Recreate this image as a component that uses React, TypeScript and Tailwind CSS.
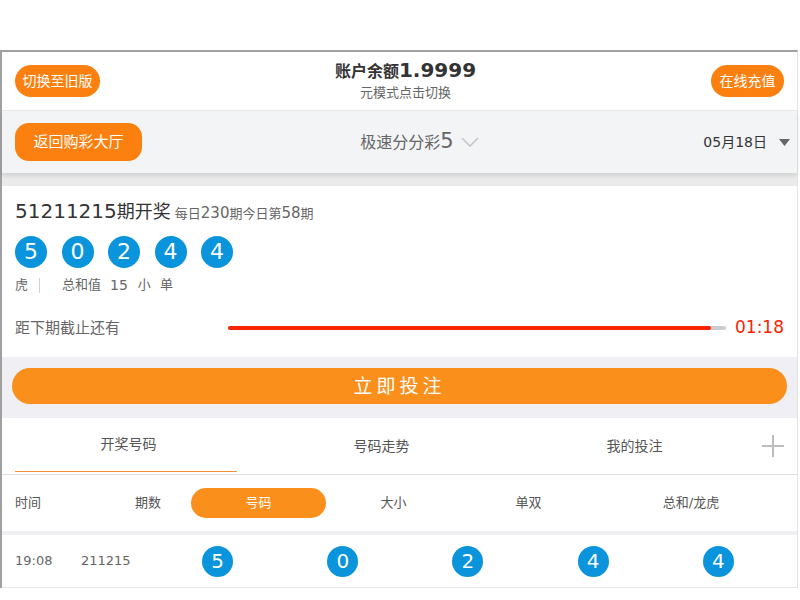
import React from "react";

const balls = [5, 0, 2, 4, 4];

const subTabs = [
  { label: "大小", w: "w-[135px]" },
  { label: "单双", w: "w-[135px]" },
  { label: "总和/龙虎", w: "w-[190px]" },
];

function Ball({ n, big }: { n: number; big?: boolean }) {
  return (
    <span
      className={
        big
          ? "flex h-[32px] w-[32px] items-center justify-center rounded-full bg-[#0a94dc] text-[22px] leading-none text-white"
          : "flex h-[31px] w-[31px] items-center justify-center rounded-full bg-[#0a94dc] text-[20px] leading-none text-white"
      }
    >
      {n}
    </span>
  );
}

export default function App() {
  return (
    <div className="min-h-[600px] bg-white pt-[50px] font-['DejaVu_Sans','Noto_Sans_CJK_SC',sans-serif]">
      <div className="mr-[2px] border-t-2 border-l-2 border-r border-t-[#a0a0a0] border-l-[#a0a0a0] border-r-[#e3e3e3]">
        {/* balance bar ------------------------------------------------ */}
        <div className="grid h-[59px] grid-cols-[1fr_auto_1fr] items-center border-b border-[#e8e8e8] px-[13px]">
          <button className="flex h-[32px] w-[85px] items-center justify-center rounded-full bg-[#fc800f] text-[14px] text-white">
            切换至旧版
          </button>
          <div className="flex flex-col items-center pl-[12px] pb-[2px]">
            <div className="leading-[24px] font-bold text-[#333]">
              <span className="text-[16px]">账户余额</span>
              <span className="text-[20px]">1.9999</span>
            </div>
            <div className="text-[13px] leading-[18px] text-[#666]">元模式点击切换</div>
          </div>
          <button className="flex h-[32px] w-[73px] items-center justify-center justify-self-end rounded-full bg-[#fc800f] text-[14px] text-white">
            在线充值
          </button>
        </div>

        {/* lottery switch bar ----------------------------------------- */}
        <div className="relative z-10 grid h-[62px] grid-cols-[1fr_auto_1fr] items-center bg-[#f3f4f6] pl-[13px] pr-[7px] shadow-[0_3px_4px_rgba(0,0,0,0.1)]">
          <button className="flex h-[38px] w-[127px] items-center justify-center rounded-[14px] bg-[#fc800f] text-[15px] text-white">
            返回购彩大厅
          </button>
          <div className="flex items-center gap-[7px] pl-[34px] text-[#666]">
            <span>
              <span className="text-[16px]">极速分分彩</span>
              <span className="text-[21px]">5</span>
            </span>
            <svg width="18" height="10" viewBox="0 0 18 10">
              <path d="M1 1 L9 9 L17 1" fill="none" stroke="#c6c6c6" strokeWidth="1.6" />
            </svg>
          </div>
          <div className="flex items-center justify-self-end">
            <span className="text-[14px] text-[#333]">05月18日</span>
            <svg className="ml-[12px]" width="11" height="7" viewBox="0 0 11 7">
              <polygon points="0,0 11,0 5.5,7" fill="#666" />
            </svg>
          </div>
        </div>
        <div className="h-[13px] bg-[#ebebeb]" />

        {/* latest draw card ------------------------------------------- */}
        <div className="bg-white pt-[12px] pr-[13px] pb-[17px] pl-[13px]">
          <div className="flex h-[26px] items-baseline leading-[26px]">
            <span className="text-[20px] text-[#333]">
              51211215<span className="text-[18px]">期开奖</span>
            </span>
            <span className="ml-[4px] text-[15px] text-[#666]">
              <span className="text-[13px]">每日</span>230
              <span className="text-[13px]">期今日第</span>58
              <span className="text-[13px]">期</span>
            </span>
          </div>
          <div className="mt-[12px] flex gap-[14.5px]">
            {balls.map((n, i) => (
              <Ball key={i} n={n} big />
            ))}
          </div>
          <div className="mt-[7px] flex h-[20px] items-center text-[14px] text-[#666]">
            <span className="text-[13px]">虎</span>
            <span className="mx-[11px] h-[15px] w-px bg-[#d0d0d0]" />
            <span className="ml-[11px] text-[13px]">总和值</span>
            <span className="ml-[9px]">15</span>
            <span className="ml-[10px] text-[13px]">小</span>
            <span className="ml-[9px] text-[13px]">单</span>
          </div>
          <div className="mt-[21px] flex h-[24px] items-center">
            <span className="w-[213px] text-[15px] text-[#666]">距下期截止还有</span>
            <div className="h-[4px] flex-1 rounded-full bg-[#cccccc]">
              <div className="h-[4px] w-[97%] rounded-full bg-[#fa2300]" />
            </div>
            <span className="ml-[9px] text-[17px] text-[#fa2300]">01:18</span>
          </div>
        </div>

        {/* bet button ------------------------------------------------- */}
        <div className="bg-[#efeff4] px-[10px] pt-[11px] pb-[14px]">
          <button className="flex h-[36px] w-full items-center justify-center rounded-full bg-[#fa8f1c] text-[19px] tracking-[4px] text-white">
            立即投注
          </button>
        </div>

        {/* tabs ------------------------------------------------------- */}
        <div className="flex h-[57px] border-b border-[#dddddd] bg-white">
          <div className="flex w-[253px] flex-col">
            <div className="flex flex-1 items-center justify-center text-[14px] text-[#555]">开奖号码</div>
            <div className="mr-[18px] mb-[2px] ml-[13px] h-px bg-[#f39233]" />
          </div>
          <div className="flex w-[253px] items-center justify-center text-[14px] text-[#555]">号码走势</div>
          <div className="flex w-[253px] items-center justify-center text-[14px] text-[#555]">我的投注</div>
          <div className="flex flex-1 items-center justify-start pl-[1px]">
            <svg width="22" height="22" viewBox="0 0 22 22">
              <path d="M11 0 V22 M0 11 H22" stroke="#bdbdbd" strokeWidth="2" />
            </svg>
          </div>
        </div>

        {/* sub tabs --------------------------------------------------- */}
        <div className="flex h-[56px] items-center bg-white pl-[13px] text-[13px] text-[#555]">
          <span className="w-[103px]">时间</span>
          <span className="w-[60px] text-center">期数</span>
          <span className="w-[13px]" />
          <span className="flex h-[30px] w-[135px] items-center justify-center rounded-full bg-[#fa8f1c] text-white">
            号码
          </span>
          {subTabs.map((t) => (
            <span key={t.label} className={`${t.w} text-center`}>
              {t.label}
            </span>
          ))}
        </div>
        <div className="h-[4px] bg-[#efeff4]" />

        {/* history row ------------------------------------------------ */}
        <div className="flex h-[53px] items-center border-b border-[#e8e8e8] bg-white pr-[16px] pl-[13px]">
          <div className="flex w-[140px] text-[13px] text-[#666]">
            <span className="w-[66px]">19:08</span>
            <span>211215</span>
          </div>
          <div className="grid flex-1 grid-cols-5">
            {balls.map((n, i) => (
              <div key={i} className="flex justify-center">
                <Ball n={n} />
              </div>
            ))}
          </div>
        </div>
      </div>
    </div>
  );
}
